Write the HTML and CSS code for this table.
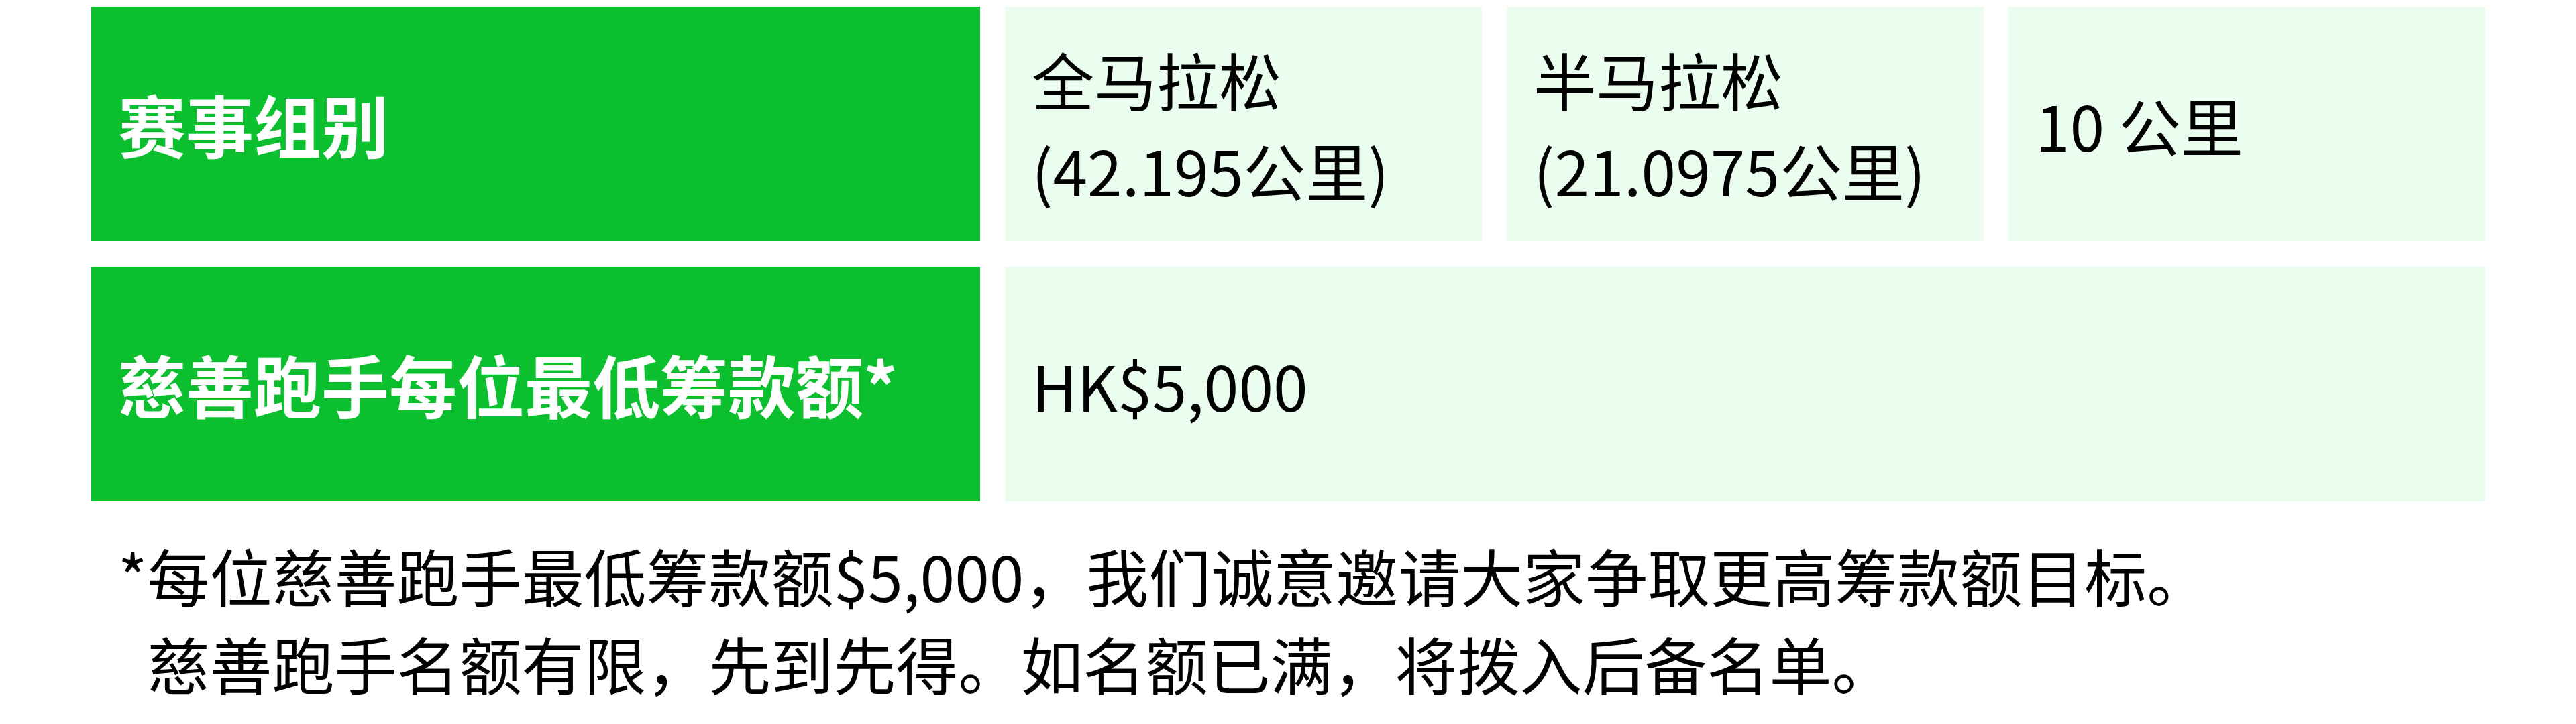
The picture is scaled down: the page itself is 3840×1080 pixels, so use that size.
FILE: index.html
```html
<!DOCTYPE html>
<html lang="zh-CN">
<head>
<meta charset="utf-8">
<title>赛事组别</title>
<link rel="stylesheet" href="styles.css">
</head>
<body>
<main class="page">
  <section class="table">
    <div class="cell label">赛事组别</div>
    <div class="cell value">全马拉松<br>(42.195公里)</div>
    <div class="cell value">半马拉松<br>(21.0975公里)</div>
    <div class="cell value">10 公里</div>
    <div class="cell label">慈善跑手每位最低筹款额*</div>
    <div class="cell value span3">HK$5,000</div>
  </section>
  <div class="note">
    <span class="star">*</span>
    <p class="note-text">每位慈善跑手最低筹款额$5,000，我们诚意邀请大家争取更高筹款额目标。<br>慈善跑手名额有限，先到先得。如名额已满，将拨入后备名单。</p>
  </div>
</main>
</body>
</html>
```

FILE: styles.css
```css
html, body {
  margin: 0;
  padding: 0;
  background: #ffffff;
}

body {
  font-family: "Noto Sans CJK SC", "Noto Sans", sans-serif;
  color: #000000;
}

.page {
  padding: 10px 135px 0 136px;
}

.table {
  display: grid;
  grid-template-columns: 1325px repeat(3, 711px);
  grid-auto-rows: 350px;
  column-gap: 37px;
  row-gap: 38px;
}

.cell {
  display: flex;
  align-items: center;
  padding-left: 40px;
  box-sizing: border-box;
}

.label {
  background: #0bbf2e;
  color: #ffffff;
  font-weight: 700;
  font-size: 101px;
  line-height: 1.2;
}

.value {
  background: #ebfdef;
  font-size: 93px;
  line-height: 135px;
}

.span3 {
  grid-column: span 3;
}

.note {
  display: flex;
  margin-top: 44px;
  padding-left: 40px;
  font-size: 93px;
  line-height: 131px;
}

.star {
  flex: none;
}

.note-text {
  margin: 0;
}
```
